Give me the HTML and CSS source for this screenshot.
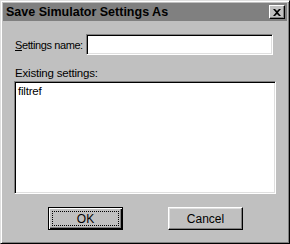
FILE: index.html
```html
<!DOCTYPE html>
<html>
<head>
    <title>Save Simulator Settings As</title>
    <link rel="stylesheet" href="styles.css">
</head>
<body>
    <div class="window">
        <div class="titlebar">
            <span class="title">Save Simulator Settings As</span>
            <button class="close" type="button">
                <svg width="8" height="7" viewBox="0 0 8 7"><path d="M0 0h2l2 2 2-2h2L5 3.5 8 7H6L4 5 2 7H0l3-3.5z" fill="#000"/></svg>
            </button>
        </div>
        <div class="body">
            <div class="name-row">
                <label for="name"><u>S</u>ettings name:</label>
                <input type="text" id="name" class="field">
            </div>
            <div class="existing-label">Existing settings:</div>
            <div class="listbox">
                <div class="item">filtref</div>
            </div>
            <div class="buttons">
                <button class="btn default" type="button"><span class="focus">OK</span></button>
                <button class="btn" type="button">Cancel</button>
            </div>
        </div>
    </div>
</body>
</html>
```

FILE: styles.css
```css
body { margin: 0; background: #c0c0c0; font-family: "Liberation Sans", Arial, sans-serif; font-size: 11px; color: #000; }
.window { width: 290px; height: 244px; box-sizing: border-box; background: #c0c0c0; border: 1px solid; border-color: #dfdfdf #000 #000 #dfdfdf; box-shadow: inset 1px 1px #fff, inset -1px -1px #808080; padding: 2px; }
.titlebar { height: 18px; background: #808080; display: flex; align-items: center; justify-content: space-between; padding: 0 2px 0 3px; }
.title { font-weight: bold; font-size: 12.5px; white-space: nowrap; }
.close { width: 16px; height: 14px; padding: 0; margin: 0; background: #c0c0c0; border: 1px solid; border-color: #fff #000 #000 #fff; box-shadow: inset -1px -1px #808080; display: flex; align-items: center; justify-content: center; flex: none; }
.body { padding: 13px 12px 0 11px; }
.name-row { display: flex; align-items: center; height: 21px; }
.name-row label { flex: none; width: 71px; padding-left: 1px; white-space: nowrap; font-size: 11px; letter-spacing: -0.4px; }
.field { flex: none; width: 187px; height: 21px; box-sizing: border-box; margin: 0; border: 1px solid; border-color: #808080 #fff #fff #808080; box-shadow: inset 1px 1px #000, inset -1px -1px #dfdfdf; background: #fff; padding: 0 3px; font: inherit; }
.existing-label { margin-top: 11px; padding-left: 1px; height: 15px; line-height: 15px; font-size: 11.5px; letter-spacing: -0.2px; }
.listbox { height: 113px; width: 262px; box-sizing: border-box; background: #fff; border: 1px solid; border-color: #808080 #fff #fff #808080; box-shadow: inset 1px 1px #000, inset -1px -1px #dfdfdf; padding: 2px; }
.item { line-height: 14px; padding-left: 1px; font-size: 11.5px; letter-spacing: -0.2px; }
.buttons { display: flex; gap: 45px; margin-top: 13px; padding-left: 34px; }
.btn { width: 75px; height: 23px; padding: 0; background: #c0c0c0; border: 1px solid; border-color: #fff #000 #000 #fff; box-shadow: inset -1px -1px #808080, inset 1px 1px #dfdfdf; font: inherit; font-size: 12px; color: #000; }
.btn.default { border: 1px solid #000; box-shadow: inset 1px 1px #fff, inset -1px -1px #000, inset -2px -2px #808080; padding: 3px; }
.focus { display: flex; align-items: center; justify-content: center; height: 100%; border: 1px dotted #000; box-sizing: border-box; }
```
